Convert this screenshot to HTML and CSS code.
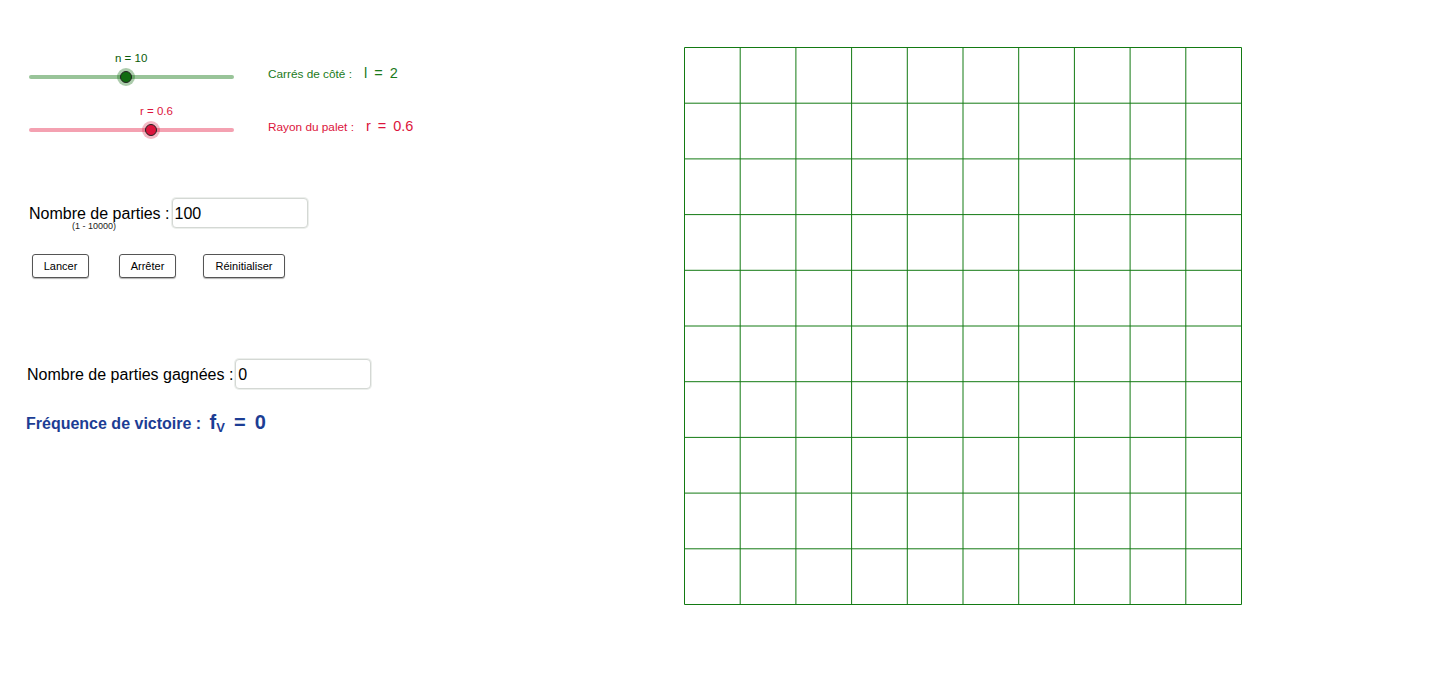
FILE: index.html
```html
<!DOCTYPE html>
<html lang="fr">
<head>
<meta charset="utf-8">
<title>Palet</title>
<link rel="stylesheet" href="styles.css">
</head>
<body>
<div class="app">
  <div class="left">
    <div class="slider-row green">
      <div class="slider">
        <div class="slider-label" style="margin-left:86px">n = 10</div>
        <div class="track">
          <span class="knob" style="left:47.3%"></span>
        </div>
      </div>
      <div class="caption">Carrés de côté :<span class="math">l<span class="eq">=</span>2</span></div>
    </div>
    <div class="slider-row red second">
      <div class="slider">
        <div class="slider-label" style="margin-left:111px">r = 0.6</div>
        <div class="track">
          <span class="knob" style="left:59.5%"></span>
        </div>
      </div>
      <div class="caption">Rayon du palet :<span class="math">r<span class="eq">=</span>0.6</span></div>
    </div>

    <div class="field-row parties">
      <div class="field-label">
        <div class="label-text">Nombre de parties :</div>
        <div class="label-sub">(1 - 10000)</div>
      </div>
      <div class="input">100</div>
    </div>

    <div class="buttons">
      <button class="btn b1">Lancer</button>
      <button class="btn b2">Arrêter</button>
      <button class="btn b3">Réinitialiser</button>
    </div>

    <div class="field-row gagnees">
      <div class="field-label">
        <div class="label-text">Nombre de parties gagnées :</div>
      </div>
      <div class="input">0</div>
    </div>

    <div class="freq">Fréquence de victoire : <span class="fmath">f<sub>V</sub><span class="eq">=</span>0</span></div>
  </div>

  <div class="board">
    <svg class="grid" width="559" height="559" viewBox="0 0 559 559">
      <g stroke="#137a13" stroke-width="1" fill="none">
        <line x1="0.5" y1="0.5" x2="557.5" y2="0.5"/>
        <line x1="0.5" y1="56.2" x2="557.5" y2="56.2"/>
        <line x1="0.5" y1="111.9" x2="557.5" y2="111.9"/>
        <line x1="0.5" y1="167.6" x2="557.5" y2="167.6"/>
        <line x1="0.5" y1="223.3" x2="557.5" y2="223.3"/>
        <line x1="0.5" y1="279" x2="557.5" y2="279"/>
        <line x1="0.5" y1="334.7" x2="557.5" y2="334.7"/>
        <line x1="0.5" y1="390.4" x2="557.5" y2="390.4"/>
        <line x1="0.5" y1="446.1" x2="557.5" y2="446.1"/>
        <line x1="0.5" y1="501.8" x2="557.5" y2="501.8"/>
        <line x1="0.5" y1="557.5" x2="557.5" y2="557.5"/>
        <line x1="0.5" y1="0.5" x2="0.5" y2="557.5"/>
        <line x1="56.2" y1="0.5" x2="56.2" y2="557.5"/>
        <line x1="111.9" y1="0.5" x2="111.9" y2="557.5"/>
        <line x1="167.6" y1="0.5" x2="167.6" y2="557.5"/>
        <line x1="223.3" y1="0.5" x2="223.3" y2="557.5"/>
        <line x1="279" y1="0.5" x2="279" y2="557.5"/>
        <line x1="334.7" y1="0.5" x2="334.7" y2="557.5"/>
        <line x1="390.4" y1="0.5" x2="390.4" y2="557.5"/>
        <line x1="446.1" y1="0.5" x2="446.1" y2="557.5"/>
        <line x1="501.8" y1="0.5" x2="501.8" y2="557.5"/>
        <line x1="557.5" y1="0.5" x2="557.5" y2="557.5"/>
      </g>
    </svg>
  </div>
</div>
</body>
</html>
```
FILE: styles.css
```css
* { box-sizing: border-box; }
html, body {
  margin: 0;
  padding: 0;
  background: #ffffff;
  font-family: "Liberation Sans", Arial, sans-serif;
  color: #000;
}
.app {
  display: flex;
  width: 1440px;
  height: 700px;
}
.left {
  width: 684px;
  padding: 51px 0 0 29px;
  display: flex;
  flex-direction: column;
}
.slider-row {
  display: flex;
  align-items: flex-end;
}
.slider-row.second { margin-top: 25px; }
.slider {
  width: 205px;
  display: flex;
  flex-direction: column;
}
.slider-label {
  font-size: 11.5px;
  line-height: 14px;
  height: 14px;
  white-space: nowrap;
}
.track {
  position: relative;
  margin-top: 10px;
  height: 4px;
  border-radius: 2px;
}
.knob {
  position: absolute;
  top: 50%;
  width: 12px;
  height: 12px;
  margin: -6px 0 0 -6px;
  border-radius: 50%;
  border: 1px solid #222;
}
.green .slider-label { color: #0a5c0a; }
.green .track { background: #99c499; }
.green .knob { background: #106c10; box-shadow: 0 0 0 3px rgba(16,108,16,0.35); }
.red .slider-label { color: #dc143c; }
.red .track { background: #f4a1b1; }
.red .knob { background: #dc143c; box-shadow: 0 0 0 3px rgba(220,20,60,0.3); }

.caption {
  margin-left: 34px;
  font-size: 11.8px;
  line-height: 12px;
  margin-bottom: -1px;
  white-space: nowrap;
}
.green .caption { color: #1a7a1a; }
.red .caption { color: #dc143c; }
.math {
  font-size: 14.5px;
  margin-left: 12px;
}
.math .eq {
  margin: 0 7px;
}

.field-row {
  display: flex;
  align-items: flex-start;
}
.field-row.parties { margin-top: 66px; }
.field-row.gagnees { margin-top: 81px; margin-left: -2px; }
.field-label {
  margin-top: 7px;
  margin-right: 2px;
  display: flex;
  flex-direction: column;
}
.label-text {
  font-size: 16px;
  line-height: 18px;
  white-space: nowrap;
}
.label-sub {
  font-size: 9px;
  line-height: 10px;
  margin-top: -2px;
  margin-left: 43px;
  color: #222;
}
.input {
  width: 136px;
  height: 30px;
  border: 1px solid #d4d8d4;
  border-radius: 4px;
  box-shadow: 0 0 0 1px rgba(200,210,200,0.35);
  font-size: 16px;
  line-height: 29px;
  padding-left: 2px;
  background: #fff;
}

.buttons {
  display: flex;
  margin-top: 23px;
  margin-left: 3px;
}
.btn {
  height: 24px;
  padding: 0 0 1px;
  font-family: "Liberation Sans", Arial, sans-serif;
  font-size: 11px;
  color: #000;
  background: #fff;
  border: 1px solid #555;
  border-radius: 3px;
  box-shadow: 0 1px 1px rgba(0,0,0,0.3);
}
.b1 { width: 57px; }
.b2 { width: 57px; margin-left: 30px; }
.b3 { width: 82px; margin-left: 27px; }

.freq {
  margin-top: 22px;
  margin-left: -3px;
  font-size: 16px;
  font-weight: bold;
  color: #1c3d94;
  line-height: 22px;
  white-space: nowrap;
}
.fmath {
  font-size: 20px;
  margin-left: 4px;
  color: #1c3d94;
}
.fmath sub {
  font-size: 13px;
  vertical-align: -3px;
}
.fmath .eq {
  margin: 0 9px;
}

.board {
  padding-top: 47px;
}
.grid { display: block; }
```
